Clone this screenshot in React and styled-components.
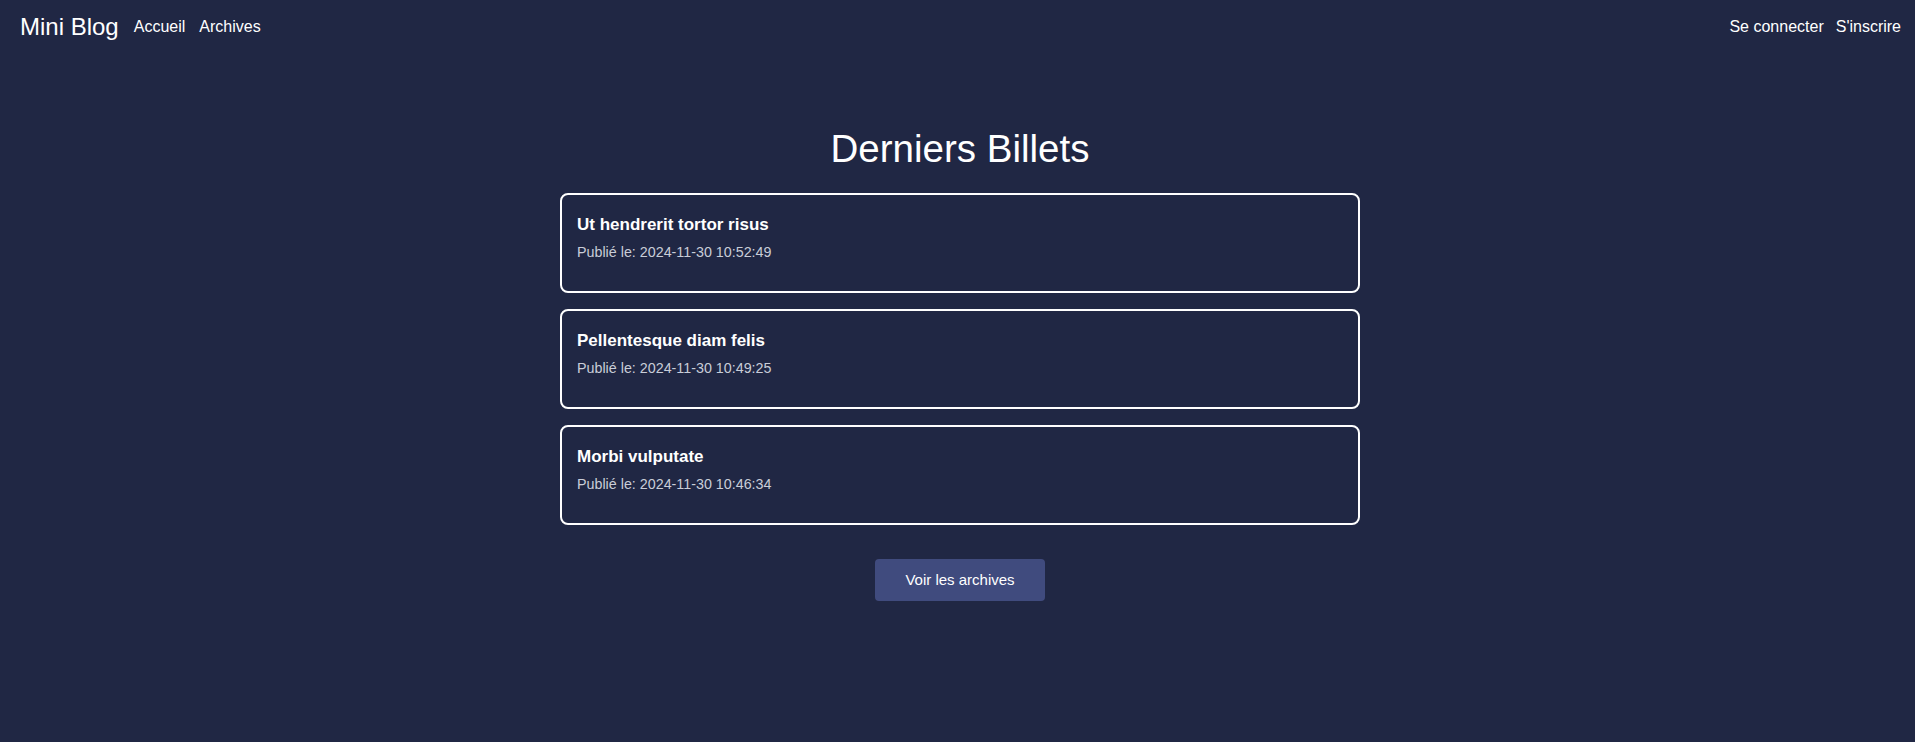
import React from "react";
import styled, { createGlobalStyle } from "styled-components";

const posts = [
  { id: 1, title: "Ut hendrerit tortor risus", date: "2024-11-30 10:52:49" },
  { id: 2, title: "Pellentesque diam felis", date: "2024-11-30 10:49:25" },
  { id: 3, title: "Morbi vulputate", date: "2024-11-30 10:46:34" },
];

function App() {
  return (
    <>
      <GlobalStyle />
      <Page>
        <Nav>
          <NavGroup>
            <Brand href="#">Mini Blog</Brand>
            <NavLink href="#">Accueil</NavLink>
            <NavLink href="#">Archives</NavLink>
          </NavGroup>
          <NavGroup $right>
            <NavLink href="#">Se connecter</NavLink>
            <NavLink href="#">S'inscrire</NavLink>
          </NavGroup>
        </Nav>
        <Main>
          <Heading>Derniers Billets</Heading>
          <PostList>
            {posts.map((post) => (
              <PostCard key={post.id}>
                <PostTitle>{post.title}</PostTitle>
                <PostDate>Publié le: {post.date}</PostDate>
              </PostCard>
            ))}
          </PostList>
          <ArchiveButton>Voir les archives</ArchiveButton>
        </Main>
      </Page>
    </>
  );
}

export default App;

const GlobalStyle = createGlobalStyle`
  html, body {
    margin: 0;
    padding: 0;
    background: #202744;
  }
  body {
    font-family: "Liberation Sans", Arial, sans-serif;
    color: #ffffff;
  }
`;

const Page = styled.div`
  min-height: 742px;
  background: #202744;
`;

const Nav = styled.nav`
  height: 54px;
  padding: 0 14px 0 20px;
  display: flex;
  justify-content: space-between;
  align-items: center;
`;

const NavGroup = styled.div`
  display: flex;
  align-items: center;
  gap: ${(props) => (props.$right ? "12px" : "14px")};
`;

const Brand = styled.a`
  font-size: 24px;
  color: #ffffff;
  text-decoration: none;
  margin-right: 1px;
`;

const NavLink = styled.a`
  font-size: 16px;
  color: #ffffff;
  text-decoration: none;
`;

const Main = styled.main`
  display: flex;
  flex-direction: column;
  align-items: center;
  padding: 73px 0 0 5px;
`;

const Heading = styled.h1`
  margin: 0 0 22px;
  font-size: 38.5px;
  font-weight: normal;
  line-height: 44px;
`;

const PostList = styled.div`
  width: 800px;
  display: flex;
  flex-direction: column;
  gap: 16px;
`;

const PostCard = styled.div`
  box-sizing: border-box;
  height: 100px;
  padding: 16px 15px;
  border: 2px solid #ffffff;
  border-radius: 8px;
`;

const PostTitle = styled.h2`
  margin: 0;
  font-size: 17px;
  font-weight: bold;
  line-height: 27px;
`;

const PostDate = styled.p`
  margin: 4px 0 0;
  font-size: 14.3px;
  line-height: 21px;
  color: #c9cdd8;
`;

const ArchiveButton = styled.button`
  margin-top: 34px;
  padding: 12px 30px;
  border: none;
  border-radius: 4px;
  background: #404b7e;
  color: #ffffff;
  font-family: "Liberation Sans", Arial, sans-serif;
  font-size: 15px;
  line-height: 18px;
  cursor: pointer;
`;
